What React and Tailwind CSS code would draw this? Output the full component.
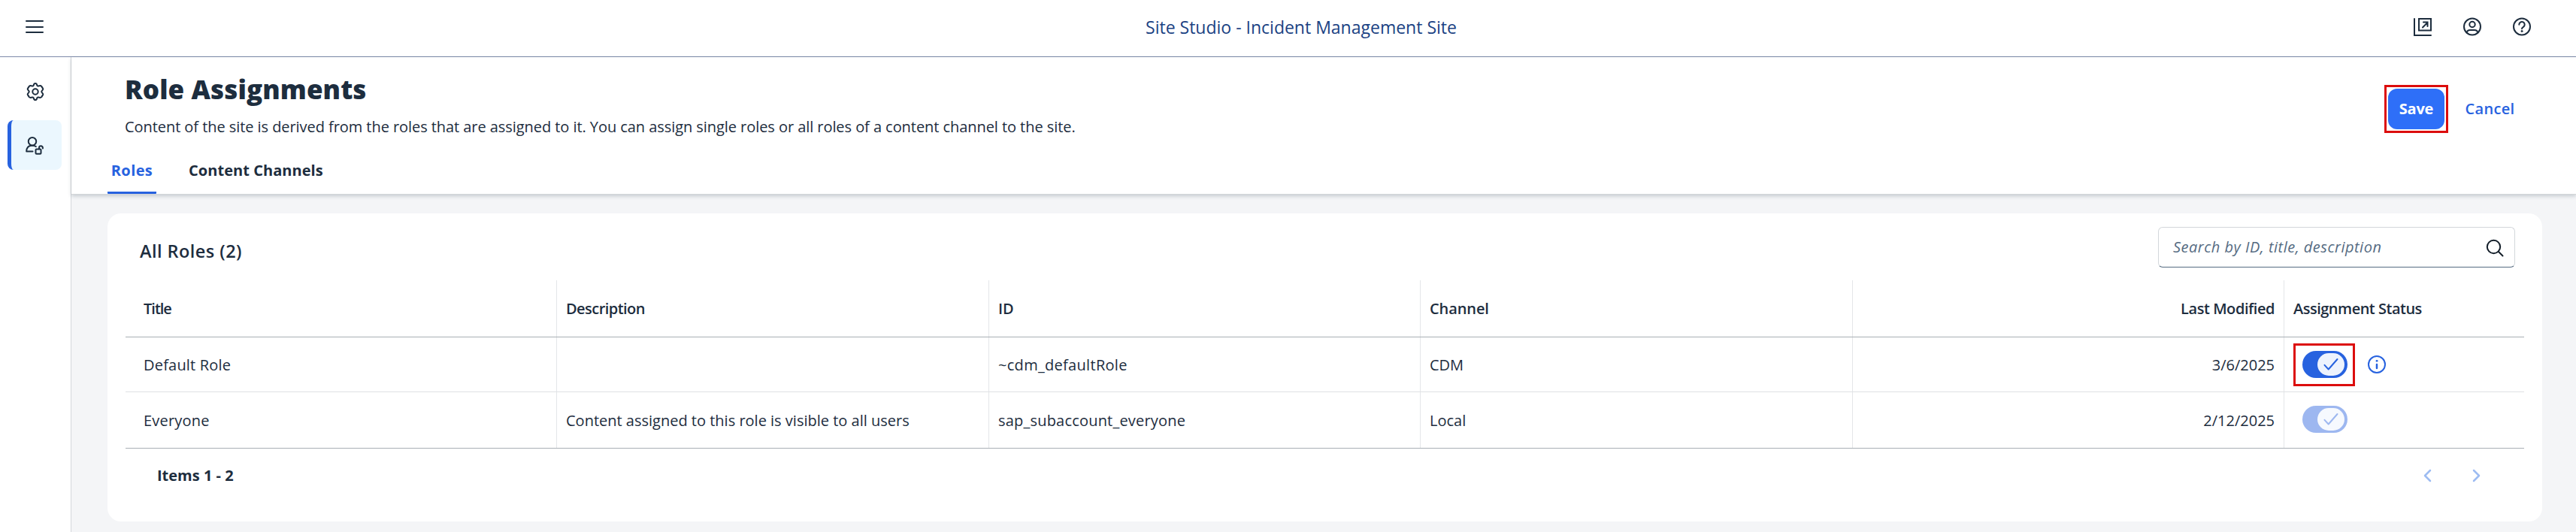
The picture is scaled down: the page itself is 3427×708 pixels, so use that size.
import React from "react";

const stroke = {
  fill: "none",
  stroke: "currentColor",
  strokeWidth: 2,
  strokeLinecap: "round",
  strokeLinejoin: "round",
};

function MenuIcon() {
  return (
    <svg width="24" height="24" viewBox="0 0 24 24" {...stroke}>
      <path d="M1 4h22M1 12h22M1 19h22" />
    </svg>
  );
}

function GearIcon() {
  return (
    <svg width="24" height="24" viewBox="0 0 24 24" {...stroke}>
      <circle cx="12" cy="12" r="3.700" />
      <path d="M12 1c1.300 0 1.900.7 2.200 2.300.2 1 1.100 1.500 2.100 1.200 1.900-.7 2.900-.7 3.900.4l1.900 3c.6 1-.1 1.800-1.100 2.700-.8.8-.8 2 0 2.800 1 .9 1.700 1.700 1.100 2.700l-1.900 3c-1 1.100-2 1.100-3.900.4-1-.3-1.900.2-2.100 1.200-.3 1.600-.9 2.300-2.200 2.300s-1.900-.7-2.200-2.300c-.2-1-1.100-1.500-2.100-1.200-1.900.7-2.900.7-3.900-.4l-1.900-3c-.6-1 .1-1.800 1.100-2.700.8-.8.8-2 0-2.800-1-.9-1.700-1.700-1.100-2.700l1.900-3c1-1.100 2-1.100 3.900-.4 1 .3 1.900-.2 2.100-1.200C10.100 1.700 10.700 1 12 1z" />
    </svg>
  );
}

function UserUnlockIcon() {
  return (
    <svg width="24" height="24" viewBox="0 0 24 24" {...stroke}>
      <circle cx="9" cy="6.200" r="5.200" />
      <path d="M9.500 19.500H1.200C1.200 14.500 4 11.700 8 11.700h2c1.600 0 2.900.5 3.800 1.300" />
      <rect x="13.500" y="16.500" width="7" height="6.200" rx="1" />
      <path d="M18 16.200v-1.400a2.400 2.400 0 0 1 4.900 0v.7" />
    </svg>
  );
}

function OpenSiteIcon() {
  return (
    <svg width="26" height="26" viewBox="0 0 26 26" {...stroke} strokeLinejoin="miter">
      <path d="M2 2v22h22" />
      <rect x="8" y="2" width="16" height="15.500" />
      <path d="M13 13.500l6.500-6.500M14 6.500h5.500V12" />
    </svg>
  );
}

function AccountIcon() {
  return (
    <svg width="26" height="26" viewBox="0 0 26 26" {...stroke}>
      <circle cx="13" cy="12.500" r="11" />
      <circle cx="13" cy="9.500" r="3.700" />
      <path d="M5.500 20.500C6.200 17.800 8 17 10 17h6c2 0 3.800.8 4.500 3.500" />
    </svg>
  );
}

function HelpIcon() {
  return (
    <svg width="26" height="26" viewBox="0 0 26 26" {...stroke}>
      <circle cx="13" cy="12.500" r="11" />
      <path d="M9.300 9.800a3.700 3.700 0 1 1 5.700 3c-1.300.8-2 1.400-2 2.400" />
      <circle cx="13" cy="18.500" r="1" fill="currentColor" strokeWidth="1" />
    </svg>
  );
}

function Toggle({ disabled }) {
  return (
    <span
      className={`flex h-9 w-[60px] shrink-0 items-center justify-end rounded-full bg-[#2762df] pr-1 ${disabled ? "opacity-45" : ""}`}
    >
      <span className="flex h-[30px] w-9 items-center justify-center rounded-full bg-[#edf3fd] text-[#2762df]">
        <svg width="36" height="30" viewBox="0 0 36 30" {...stroke}>
          <path d="M9.500 15.800l5.200 5.700L26.500 8" />
        </svg>
      </span>
    </span>
  );
}

const grid = "grid grid-cols-[574px_575px_574px_575px_574px_1fr]";
const line = "border-r border-[#e4e6e9]";

function Row({ cells, className, children }) {
  return (
    <div className={`${grid} ${className}`}>
      {cells.map(([text, cls], i) => (
        <div
          key={i}
          className={`flex items-center whitespace-nowrap pt-px ${line} ${i === 0 ? "pl-6" : i === 4 ? "justify-end pr-3" : "pl-3"}`}
        >
          <span className={cls}>{text}</span>
        </div>
      ))}
      <div className="flex items-center whitespace-nowrap pl-3">{children}</div>
    </div>
  );
}

export default function App() {
  return (
    <div className="flex h-[708px] w-[3427px] flex-col overflow-hidden bg-white font-['Open_Sans',sans-serif] text-[20px] leading-[28px] text-[#1d2d3e]">
      <header className="grid h-[76px] shrink-0 grid-cols-[1fr_auto_1fr] items-center border-b border-[#7d8aa9]">
        <div className="pb-[3px] pl-[34px]">
          <MenuIcon />
        </div>
        <h1 className="-ml-1 mr-[-39px] pb-[3px] text-[23px] text-[#1b4283]">Site Studio - Incident Management Site</h1>
        <div className="flex justify-end gap-10 pr-[59px] pb-[3px]">
          <OpenSiteIcon />
          <AccountIcon />
          <HelpIcon />
        </div>
      </header>

      <div className="flex min-h-0 flex-1">
        <nav className="flex w-[95px] shrink-0 flex-col border-r border-[#d5d8dc] pl-2.5">
          <div className="flex h-[84px] items-center pt-3 pb-1 pl-[25px]">
            <GearIcon />
          </div>
          <div className="flex h-[66px] w-[72px] items-center rounded-lg border-l-[5px] border-[#2762df] bg-[#ebf7fe] pt-0.5 pl-[19px]">
            <UserUnlockIcon />
          </div>
        </nav>

        <main className="flex min-w-0 flex-1 flex-col bg-[#f4f5f7]">
          <section className="relative flex h-[183px] shrink-0 flex-col border-b border-[#d3d6d8] bg-white shadow-[0_2px_5px_rgba(34,53,72,0.22)]">
            <div className="flex justify-between pl-[71px] pr-[71px]">
              <div className="pt-[18px]">
                <h2 className="h-[49px] text-[35px] leading-[49px] font-extrabold tracking-[0.1px]">Role Assignments</h2>
                <p className="pt-3 tracking-[-0.06px] whitespace-nowrap">
                  Content of the site is derived from the roles that are assigned to it. You can assign single roles or
                  all roles of a content channel to the site.
                </p>
              </div>
              <div className="flex items-center self-start pt-[37px]">
                <div className="flex h-16 w-[85px] items-center justify-center border-[3px] border-[#dc0d0d]">
                  <button className="h-[54px] w-[75px] rounded-xl bg-[#2e6ff8] font-bold tracking-[-0.2px] text-white">
                    Save
                  </button>
                </div>
                <button className="w-[99px] pl-3 text-center font-semibold tracking-[0.35px] text-[#2762df]">
                  Cancel
                </button>
              </div>
            </div>
            <div className="mt-auto flex pl-12 font-bold">
              <div className="flex h-[45px] w-[65px] justify-center rounded-[1px] border-b-[3px] border-[#2762df] tracking-[0.4px] text-[#2762df]">
                Roles
              </div>
              <div className="pl-[43px] tracking-[0.05px]">Content Channels</div>
            </div>
          </section>

          <section className="mt-[25px] ml-12 flex h-[410px] w-[3239px] flex-col rounded-[18px] bg-white pl-6 pr-6">
            <div className="flex h-[89px] items-start justify-between pl-[19px] pr-3 pt-[18px]">
              <h3 className="pt-[18px] text-[23.5px] font-semibold tracking-[0.45px]">All Roles (2)</h3>
              <div className="flex h-[54px] w-[475px] items-center justify-between rounded-md border border-[#d3d7db] border-b-[#556b81] pl-[19px] pr-[14px]">
                <span className="pb-px tracking-[0.5px] text-[#556b82] italic">Search by ID, title, description</span>
                <svg width="24" height="24" viewBox="0 0 24 24" className="mt-px text-[#131e29]" {...stroke}>
                  <circle cx="10.500" cy="10.500" r="8.700" />
                  <path d="M17 17l5.500 5.500" />
                </svg>
              </div>
            </div>

            <Row
              className="h-[76px] border-b border-[#a9afb5] font-semibold"
              cells={[
                ["Title", "tracking-[-1px]"],
                ["Description", "tracking-[-0.55px]"],
                ["ID", ""],
                ["Channel", "tracking-[-0.1px]"],
                ["Last Modified", "tracking-[-0.45px]"],
              ]}
            >
              <span className="pt-px tracking-[-0.5px]">Assignment Status</span>
            </Row>
            <Row
              className="h-[73px] border-b border-[#dfe1e4]"
              cells={[
                ["Default Role", "pt-px tracking-[0.2px]"],
                ["", ""],
                ["~cdm_defaultRole", "pt-px tracking-[0.3px]"],
                ["CDM", "pt-px"],
                ["3/6/2025", "pt-px"],
              ]}
            >
              <div className="flex h-[57px] w-[82px] items-center border-[3px] border-[#dc0d0d] pl-[9px]">
                <Toggle />
              </div>
              <svg width="26" height="26" viewBox="0 0 26 26" className="ml-4 text-[#2762df]" {...stroke}>
                <circle cx="13" cy="13" r="11" />
                <path d="M13 13v5" strokeWidth="2.500" />
                <circle cx="13" cy="8.300" r="1" fill="currentColor" strokeWidth="1" />
              </svg>
            </Row>
            <Row
              className="h-[75px] border-b border-[#a9afb5]"
              cells={[
                ["Everyone", "tracking-[0.2px]"],
                ["Content assigned to this role is visible to all users", ""],
                ["sap_subaccount_everyone", "tracking-[0.2px]"],
                ["Local", ""],
                ["2/12/2025", ""],
              ]}
            >
              <div className="pl-3 pb-0.5">
                <Toggle disabled />
              </div>
            </Row>

            <div className="flex h-[70px] items-center justify-between pt-0.5 pl-[42px] pr-[56px]">
              <span className="font-bold">Items 1 - 2</span>
              <div className="flex gap-[52px] text-[#9dbcf2]">
                <svg width="14" height="20" viewBox="0 0 14 20" {...stroke} strokeWidth="2.500">
                  <path d="M11 3L4 10l7 7" />
                </svg>
                <svg width="14" height="20" viewBox="0 0 14 20" {...stroke} strokeWidth="2.500">
                  <path d="M3 3l7 7-7 7" />
                </svg>
              </div>
            </div>
          </section>
        </main>
      </div>
    </div>
  );
}
